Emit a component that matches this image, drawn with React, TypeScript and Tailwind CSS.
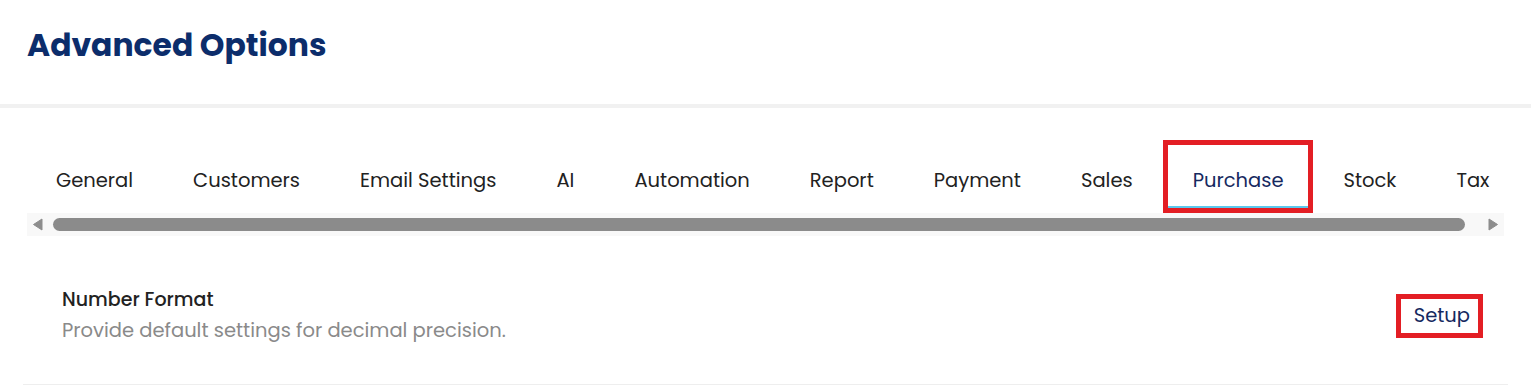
import React from 'react';

const tabs = [
  'General',
  'Customers',
  'Email Settings',
  'AI',
  'Automation',
  'Report',
  'Payment',
  'Sales',
  'Purchase',
  'Stock',
  'Tax',
];

export default function App() {
  const active = 'Purchase';

  return (
    <div className="w-full h-[387px] bg-white overflow-hidden font-['Poppins','Inter',sans-serif]">
      {/* Header */}
      <div className="h-[104px] pl-[27px] pt-[25px]">
        <h1 className="text-[31.4px] leading-[40px] font-bold text-[#0c2d6b]">Advanced Options</h1>
      </div>
      <div className="h-[4px] bg-[#f1f1f1]" />

      <div className="px-[23px] pt-[32px]">
        {/* Tabs */}
        <div className="flex pl-[3px] overflow-hidden">
          {tabs.map((tab) => (
            <button
              key={tab}
              className={`h-[73px] shrink-0 pt-[8px] text-[19.5px] whitespace-nowrap flex items-center ${
                tab === active
                  ? 'text-[#16295f] border-[5px] border-[#e31e24] px-[25px] shadow-[inset_0_-2px_0_#5ac8ee]'
                  : 'text-[#222222] px-[30px]'
              }`}
            >
              {tab}
            </button>
          ))}
        </div>

        {/* Scrollbar */}
        <div className="h-[23px] mx-[4px] bg-[#f8f8f8] flex items-center gap-[10px] pl-[5px] pr-[5px]">
          <svg width="11" height="13" viewBox="0 0 11 13" className="shrink-0">
            <path d="M10 1 L10 12 L1.5 6.5 Z" fill="#8d8d8d" stroke="#8d8d8d" strokeWidth="1" strokeLinejoin="round" />
          </svg>
          <div className="flex-1 h-[13px] rounded-full bg-[#8b8b8b] mr-[13px]" />
          <svg width="11" height="13" viewBox="0 0 11 13" className="shrink-0">
            <path d="M1 1 L1 12 L9.5 6.5 Z" fill="#8d8d8d" stroke="#8d8d8d" strokeWidth="1" strokeLinejoin="round" />
          </svg>
        </div>

        {/* Setting row */}
        <div className="flex items-center justify-between pl-[39px] pr-[25px] pt-[50px] pb-[39px] border-b border-[#eeeeee]">
          <div className="flex flex-col gap-[3px]">
            <div className="text-[19px] leading-[28px] font-medium text-[#222222]">Number Format</div>
            <div className="text-[19.5px] leading-[28px] text-[#8a8a8a]">Provide default settings for decimal precision.</div>
          </div>
          <button className="h-[44px] pl-[13px] pr-[8px] border-[5px] border-[#e31e24] text-[19.5px] text-[#16295f]">
            Setup
          </button>
        </div>
      </div>
    </div>
  );
}
